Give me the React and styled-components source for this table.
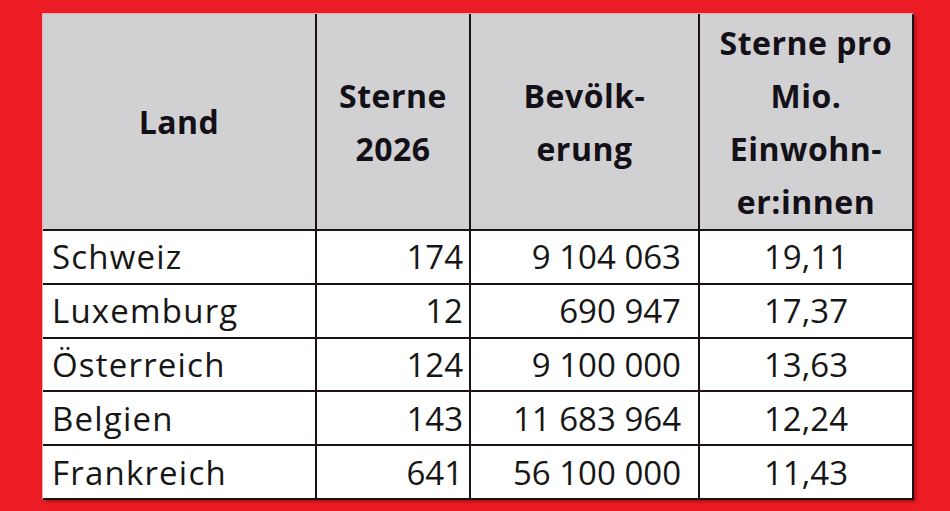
import React from "react";
import styled, { createGlobalStyle } from "styled-components";

const GlobalStyle = createGlobalStyle`
  html, body {
    margin: 0;
    padding: 0;
    background: #ec1c24;
  }
  body {
    width: 950px;
    height: 511px;
    overflow: hidden;
    font-family: "Open Sans", Lato, sans-serif;
  }
`;

const Page = styled.div`
  width: 950px;
  height: 511px;
  box-sizing: border-box;
  padding: 14px 0 0 43px;
  background: #ec1c24;
`;

const Table = styled.div`
  display: grid;
  grid-template-columns: 272px 152px 227px 212px;
  grid-template-rows: 215px repeat(5, 51.8px);
  gap: 2px;
  width: max-content;
  padding: 0 2px 2px 0;
  background: #1b1111;
  box-shadow: 2px 2px 3px rgba(90, 0, 0, 0.45), -1px -1px 0 #f3b6b8;
`;

const HeadCell = styled.div`
  display: flex;
  align-items: center;
  justify-content: center;
  text-align: center;
  background: #d1d0d2;
  color: #141018;
  font-weight: 700;
  font-size: 32px;
  line-height: 53px;
  letter-spacing: 0.5px;
`;

const Cell = styled.div`
  display: flex;
  align-items: center;
  justify-content: ${(p) =>
    p.$align === "left" ? "flex-start" : p.$align === "center" ? "center" : "flex-end"};
  padding: ${(p) => p.$pad || "0"};
  background: #fff;
  color: #161616;
  font-size: 33px;
  letter-spacing: ${(p) => (p.$align === "left" ? "1.2px" : "0")};
  white-space: nowrap;
`;

const rows = [
  ["Schweiz", "174", "9 104 063", "19,11"],
  ["Luxemburg", "12", "690 947", "17,37"],
  ["Österreich", "124", "9 100 000", "13,63"],
  ["Belgien", "143", "11 683 964", "12,24"],
  ["Frankreich", "641", "56 100 000", "11,43"],
];

export default function App() {
  return (
    <>
      <GlobalStyle />
      <Page>
        <Table>
          <HeadCell>Land</HeadCell>
          <HeadCell>
            Sterne
            <br />
            2026
          </HeadCell>
          <HeadCell>
            Bevölk-
            <br />
            erung
          </HeadCell>
          <HeadCell>
            Sterne pro
            <br />
            Mio.
            <br />
            Einwohn-
            <br />
            er:innen
          </HeadCell>
          {rows.map((r) => (
            <React.Fragment key={r[0]}>
              <Cell $align="left" $pad="0 0 0 9px">
                {r[0]}
              </Cell>
              <Cell $pad="0 6px 0 0">{r[1]}</Cell>
              <Cell $pad="0 17px 0 0">{r[2]}</Cell>
              <Cell $align="center">{r[3]}</Cell>
            </React.Fragment>
          ))}
        </Table>
      </Page>
    </>
  );
}
